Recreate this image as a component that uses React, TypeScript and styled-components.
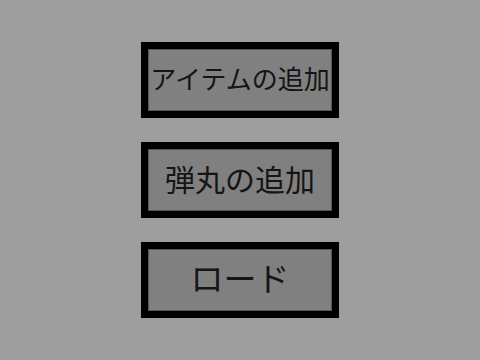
import React from "react";
import styled, { createGlobalStyle } from "styled-components";

const Global = createGlobalStyle`
  html, body { margin: 0; padding: 0; width: 100%; height: 100%; background: #9e9e9e; }
  #root { width: 100%; height: 100%; }
`;

const Page = styled.div`
  width: 480px;
  height: 360px;
  display: flex;
  flex-direction: column;
  align-items: center;
  justify-content: center;
  gap: 24px;
  background: #9e9e9e;
`;

const MenuButton = styled.button<{ $size: number }>`
  box-sizing: border-box;
  width: 198px;
  height: 76px;
  border: 7px solid #000;
  box-shadow: inset 0 0 0 1px #555;
  background: #808080;
  padding: 0 0 5px 0;
  margin: 0;
  display: flex;
  align-items: center;
  justify-content: center;
  font-family: "Noto Sans CJK JP", "Noto Sans", sans-serif;
  font-size: ${(p) => p.$size}px;
  line-height: 1;
  color: #151515;
  white-space: nowrap;
  cursor: pointer;
`;

const items = [
  { label: "アイテムの追加", size: 26 },
  { label: "弾丸の追加", size: 30 },
  { label: "ロード", size: 33 },
];

export default function App() {
  return (
    <>
      <Global />
      <Page>
        {items.map((it) => (
          <MenuButton key={it.label} $size={it.size}>
            {it.label}
          </MenuButton>
        ))}
      </Page>
    </>
  );
}
